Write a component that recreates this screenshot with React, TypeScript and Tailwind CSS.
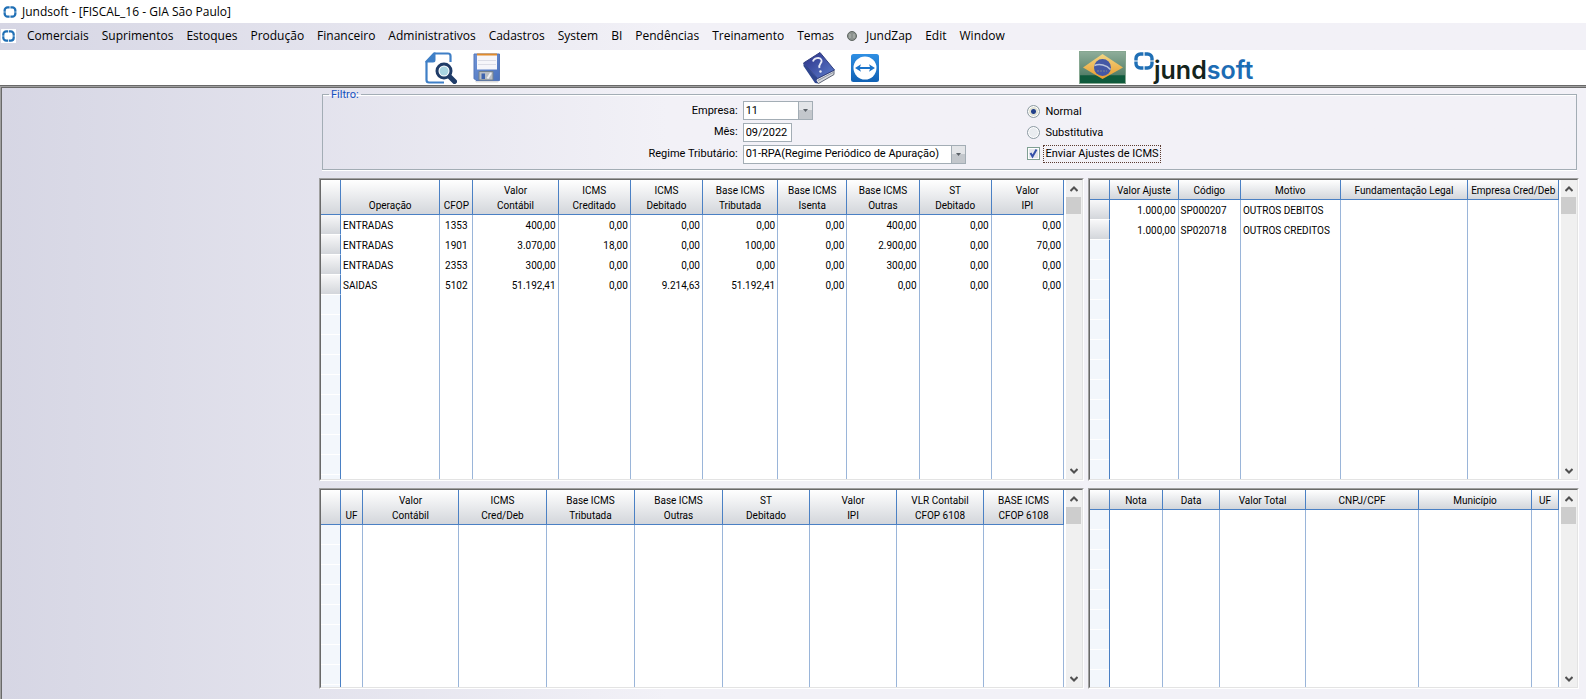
import type { ReactNode } from "react"
import clsx from "clsx"

type Align = "left" | "center" | "right"

interface Column {
  title: string[]
  width: number
  align?: Align
}

interface DataGridProps {
  label: string
  columns: Column[]
  rows?: string[][]
  tall?: boolean
}

const menuLeft = [
  "Comerciais",
  "Suprimentos",
  "Estoques",
  "Produção",
  "Financeiro",
  "Administrativos",
  "Cadastros",
  "System",
  "BI",
  "Pendências",
  "Treinamento",
  "Temas",
]

const operacoesColumns: Column[] = [
  { title: ["Operação"], width: 99 },
  { title: ["CFOP"], width: 33, align: "center" },
  { title: ["Valor", "Contábil"], width: 85, align: "right" },
  { title: ["ICMS", "Creditado"], width: 72, align: "right" },
  { title: ["ICMS", "Debitado"], width: 72, align: "right" },
  { title: ["Base ICMS", "Tributada"], width: 75, align: "right" },
  { title: ["Base ICMS", "Isenta"], width: 69, align: "right" },
  { title: ["Base ICMS", "Outras"], width: 72, align: "right" },
  { title: ["ST", "Debitado"], width: 72, align: "right" },
  { title: ["Valor", "IPI"], width: 72, align: "right" },
]

const operacoesRows = [
  ["ENTRADAS", "1353", "400,00", "0,00", "0,00", "0,00", "0,00", "400,00", "0,00", "0,00"],
  ["ENTRADAS", "1901", "3.070,00", "18,00", "0,00", "100,00", "0,00", "2.900,00", "0,00", "70,00"],
  ["ENTRADAS", "2353", "300,00", "0,00", "0,00", "0,00", "0,00", "300,00", "0,00", "0,00"],
  ["SAIDAS", "5102", "51.192,41", "0,00", "9.214,63", "51.192,41", "0,00", "0,00", "0,00", "0,00"],
]

const ajustesColumns: Column[] = [
  { title: ["Valor Ajuste"], width: 68, align: "right" },
  { title: ["Código"], width: 62 },
  { title: ["Motivo"], width: 99 },
  { title: ["Fundamentação Legal"], width: 127 },
  { title: ["Empresa Cred/Deb"], width: 90 },
]

const ajustesRows = [
  ["1.000,00", "SP000207", "OUTROS DEBITOS", "", ""],
  ["1.000,00", "SP020718", "OUTROS CREDITOS", "", ""],
]

const ufColumns: Column[] = [
  { title: ["UF"], width: 22 },
  { title: ["Valor", "Contábil"], width: 96 },
  { title: ["ICMS", "Cred/Deb"], width: 88 },
  { title: ["Base ICMS", "Tributada"], width: 88 },
  { title: ["Base ICMS", "Outras"], width: 88 },
  { title: ["ST", "Debitado"], width: 87 },
  { title: ["Valor", "IPI"], width: 87 },
  { title: ["VLR Contabil", "CFOP 6108"], width: 87 },
  { title: ["BASE ICMS", "CFOP 6108"], width: 80 },
]

const notasColumns: Column[] = [
  { title: ["Nota"], width: 53 },
  { title: ["Data"], width: 57 },
  { title: ["Valor Total"], width: 86 },
  { title: ["CNPJ/CPF"], width: 113 },
  { title: ["Município"], width: 113 },
  { title: ["UF"], width: 27 },
]

const alignClass: Record<Align, string> = {
  left: "text-left",
  center: "text-center",
  right: "text-right",
}

function BrandMark({ className }: { className?: string }) {
  return (
    <svg viewBox="0 0 20 18" className={className} fill="none" stroke="#1f6fb5" strokeWidth="3.4" aria-hidden="true">
      <path d="M9.400 2H6.500A4.500 4.500 0 0 0 2 6.500v2" />
      <path d="M10.600 2h2.900A4.500 4.500 0 0 1 18 6.500v2" />
      <path d="M9.400 16H6.500A4.500 4.500 0 0 1 2 11.500v-2" />
      <path d="M10.600 16h2.900a4.500 4.500 0 0 0 4.500-4.500v-2" />
    </svg>
  )
}

function PreviewIcon() {
  return (
    <svg viewBox="0 0 32 32" className="size-8" fill="none" aria-hidden="true">
      <path d="M9 1.500h14a2.500 2.500 0 0 1 2.500 2.500v6M1.500 9v19a2.500 2.500 0 0 0 2.500 2.500h15" stroke="#3f7fc6" strokeWidth="2.200" />
      <path d="M10.500 .5V8A2.500 2.500 0 0 1 8 10.500H.5V9L8.500 .5z" fill="#3f7fc6" />
      <path d="M25 25l4.500 4.500" stroke="#1f3c68" strokeWidth="5" strokeLinecap="round" />
      <circle cx="19" cy="19" r="7" fill="#fff" stroke="#1f3c68" strokeWidth="3" />
      <circle cx="19" cy="19" r="4.500" fill="#a9d5e2" />
    </svg>
  )
}

function SaveIcon() {
  return (
    <svg viewBox="0 0 28 30" className="h-[30px] w-7" aria-hidden="true">
      <defs>
        <linearGradient id="floppy" x1="0" y1="0" x2="1" y2="1">
          <stop offset="0" stopColor="#6f93d6" />
          <stop offset="1" stopColor="#4a72bd" />
        </linearGradient>
      </defs>
      <path d="M2 28h24l-1 1.500H3z" fill="#dcdcdc" />
      <path d="M1 1h25.500v26.500H3L1 25.500z" fill="url(#floppy)" stroke="#5577b8" />
      <path d="M4 1h20v15.500H4z" fill="#f6f6fa" />
      <path d="M4 .5h20v2H4z" fill="#e08b2c" />
      <path d="M5 7.500h18M5 11.500h18" stroke="#dcdde6" />
      <path d="M6 18.500h14v8.500H6z" fill="#b9bec4" stroke="#72808c" />
      <path d="M8.500 20.500h3.500v5.500H8.500z" fill="#3e64ae" />
      <path d="M14.500 25.500l3.500-5.500" stroke="#eef0f2" strokeWidth="2" />
    </svg>
  )
}

function HelpBookIcon() {
  return (
    <svg viewBox="0 0 32 32" className="size-8" aria-hidden="true">
      <defs>
        <linearGradient id="book" x1="0" y1="0" x2="1" y2="1">
          <stop offset="0" stopColor="#2a2e86" />
          <stop offset="1" stopColor="#5b7dcb" />
        </linearGradient>
      </defs>
      <path d="M14 26.500L31 18v4.500L15.500 31.500 12 28z" fill="#d6d8dd" stroke="#5f6676" />
      <path d="M15 28.500L31 20" stroke="#9097a5" />
      <path d="M.5 11L17 .5 31.500 18 14.500 26.500z" fill="url(#book)" stroke="#323f7e" />
      <path d="M.5 11v3L12 31l3 .5-1.500-3 1-2z" fill="#2f468f" />
      <path d="M10 9.500c.5-3.500 7-5 8.500-1.500 1.200 3-3.500 4-2 8" fill="none" stroke="#e8eaf6" strokeWidth="1.800" />
      <circle cx="17.500" cy="19.500" r="1.200" fill="#e8eaf6" />
    </svg>
  )
}

function RemoteIcon() {
  return (
    <svg viewBox="0 0 28 28" className="size-7" aria-hidden="true">
      <defs>
        <linearGradient id="remote" x1="0" y1="0" x2="0" y2="1">
          <stop offset="0" stopColor="#2f8fe3" />
          <stop offset="1" stopColor="#1061b4" />
        </linearGradient>
      </defs>
      <rect width="28" height="28" rx="2.500" fill="url(#remote)" />
      <circle cx="14" cy="14" r="11.500" fill="#fff" />
      <path d="M4 14l6-3.800-1 2.800h10l-1-2.800 6 3.800-6 3.800 1-2.800H9l1 2.800z" fill="#1a73ca" />
    </svg>
  )
}

function FlagIcon() {
  return (
    <svg viewBox="0 0 47 33" className="h-[33px] w-[47px]" aria-hidden="true">
      <defs>
        <linearGradient id="flag" x1="0" y1="0" x2="0" y2="1">
          <stop offset="0" stopColor="#8fae9a" />
          <stop offset=".72" stopColor="#55806a" />
          <stop offset=".76" stopColor="#0f5a3c" />
          <stop offset="1" stopColor="#0f5a3c" />
        </linearGradient>
        <linearGradient id="lozenge" x1="0" y1="0" x2="0" y2="1">
          <stop offset="0" stopColor="#f2d683" />
          <stop offset="1" stopColor="#e99a2c" />
        </linearGradient>
      </defs>
      <rect x=".5" y=".5" width="46" height="32" fill="url(#flag)" stroke="#86a791" />
      <path d="M23.500 3L44 16.500 23.500 28 4 16.500z" fill="url(#lozenge)" />
      <circle cx="23.500" cy="16.500" r="8.500" fill="#4458a5" />
      <path d="M15.500 14.500c5-2 12-.5 16 4" fill="none" stroke="#b9c3dc" strokeWidth="1.500" />
      <path d="M18 20h10" stroke="#7f858c" strokeDasharray="2 1" />
    </svg>
  )
}

function ToolButton({ label, children }: { label: string; children: ReactNode }) {
  return (
    <button type="button" aria-label={label} className="flex">
      {children}
    </button>
  )
}

function ScrollBar() {
  return (
    <div className="flex w-4 shrink-0 flex-col bg-[#f0f0f0]">
      <button type="button" aria-label="Rolar para cima" className="flex h-[17px] items-center justify-center">
        <svg viewBox="0 0 8 6" className="h-[6px] w-2" fill="none" stroke="#505050" strokeWidth="2" aria-hidden="true">
          <path d="M.5 5L4 1.500 7.500 5" />
        </svg>
      </button>
      <div className="h-[17px] w-[15px] bg-[#cdcdcd]" />
      <button type="button" aria-label="Rolar para baixo" className="mt-auto flex h-[17px] items-center justify-center">
        <svg viewBox="0 0 8 6" className="h-[6px] w-2" fill="none" stroke="#505050" strokeWidth="2" aria-hidden="true">
          <path d="M.5 1L4 4.500 7.500 1" />
        </svg>
      </button>
    </div>
  )
}

function DataGrid({ label, columns, rows = [], tall = false }: DataGridProps) {
  return (
    <div className="flex border border-t-[#a0a0a0] border-r-white border-b-white border-l-[#a0a0a0]">
      <div className="flex w-full gap-[2px] border border-t-[#696969] border-r-[#e3e3e3] border-b-[#e3e3e3] border-l-[#696969] bg-white">
        <table
          aria-label={label}
          className="h-full w-full min-w-0 table-fixed border-separate border-spacing-0 text-[10px] leading-[15px]"
        >
          <colgroup>
            <col style={{ width: 20 }} />
            {columns.map((column, i) => (
              <col key={i} style={{ width: column.width }} />
            ))}
          </colgroup>
          <thead>
            <tr className={tall ? "h-[35px]" : "h-5"}>
              <td className="border-r border-b border-[#4a80c4] bg-linear-to-b from-white to-[#d3d6db]" />
              {columns.map((column, i) => (
                <th
                  key={i}
                  scope="col"
                  className="border-r border-b border-[#4a80c4] bg-linear-to-b from-white to-[#d3d6db] p-0 pb-px align-bottom font-normal whitespace-nowrap"
                >
                  {column.title.map((line) => (
                    <span key={line} className="block">
                      {line}
                    </span>
                  ))}
                </th>
              ))}
            </tr>
          </thead>
          <tbody>
            {rows.map((row, r) => (
              <tr key={r} className="h-5">
                <td className="border-r border-b border-r-[#4a80c4] border-b-white bg-linear-to-b from-[#f8f8f9] to-[#d3d6db]" />
                {row.map((cell, c) => (
                  <td
                    key={c}
                    className={clsx(
                      "border-r border-[#9ab5d9] p-0 px-[2px] whitespace-nowrap",
                      alignClass[columns[c].align ?? "left"],
                    )}
                  >
                    {cell}
                  </td>
                ))}
              </tr>
            ))}
            <tr>
              <td className="border-r border-[#4a80c4] bg-[repeating-linear-gradient(to_bottom,#f3f7fc_0px,#f3f7fc_19px,#ffffff_19px,#ffffff_20px)]" />
              {columns.map((_, i) => (
                <td key={i} className="border-r border-[#9ab5d9]" />
              ))}
            </tr>
          </tbody>
        </table>
        <ScrollBar />
      </div>
    </div>
  )
}

function Combo({ id, value, className }: { id: string; value: string; className: string }) {
  return (
    <div className={clsx("relative", className)}>
      <select
        id={id}
        defaultValue={value}
        className="block h-[19px] w-full appearance-none border border-[#a3adb5] bg-white pr-4 pl-[2px] leading-4 outline-none"
      >
        <option>{value}</option>
      </select>
      <span className="pointer-events-none absolute inset-y-0 right-0 flex w-[15px] items-center justify-center border border-[#a3adb5] bg-linear-to-b from-[#e3e5e8] from-50% to-[#c3c7cc] to-50%">
        <svg viewBox="0 0 5 3" className="h-[3px] w-[5px]" aria-hidden="true">
          <path d="M0 0h5L2.500 3z" fill="#5c6268" />
        </svg>
      </span>
    </div>
  )
}

function TipoRadio({ label, checked = false }: { label: string; checked?: boolean }) {
  return (
    <label className="flex h-[21px] items-center gap-[5px]">
      <input
        type="radio"
        name="tipo"
        defaultChecked={checked}
        className="size-[13px] appearance-none rounded-full border border-[#8d9ba3] bg-[#e9ecf0] shadow-[inset_0_0_0_1px_#ffffff] checked:bg-[radial-gradient(circle,#23408a_0px,#23408a_2px,#dfe0d4_3px)]"
      />
      {label}
    </label>
  )
}

function Filtro() {
  return (
    <fieldset className="ml-[3px] border border-[#a3adb5] pb-[5px] text-[11px] leading-4 shadow-[0_1px_0_#ffffff,inset_0_1px_0_#ffffff]">
      <legend className="ml-[6px] px-[2px] leading-[13px] text-[#1450c0]">Filtro:</legend>
      <div className="grid grid-cols-[420fr_285fr_549fr]">
        <div className="col-span-2 grid grid-cols-[420fr_285fr] items-center gap-y-[2px]">
          <label htmlFor="empresa" className="pr-[5px] text-right">
            Empresa:
          </label>
          <Combo id="empresa" value="11" className="w-[70px]" />
          <label htmlFor="mes" className="pr-[5px] text-right">
            Mês:
          </label>
          <input
            id="mes"
            defaultValue="09/2022"
            className="h-[19px] w-[49px] border border-[#a3adb5] bg-white px-[2px] outline-none"
          />
          <label htmlFor="regime" className="pr-[5px] text-right">
            Regime Tributário:
          </label>
          <Combo id="regime" value="01-RPA(Regime Periódico de Apuração)" className="w-[223px]" />
        </div>
        <div className="flex flex-col">
          <TipoRadio label="Normal" checked />
          <TipoRadio label="Substitutiva" />
          <label className="flex h-[21px] items-center gap-[3px]">
            <span className="relative flex">
              <input
                type="checkbox"
                defaultChecked
                className="peer size-[13px] appearance-none border border-[#7f9f93] bg-[#e4e7ec] shadow-[inset_0_0_0_1px_#ffffff]"
              />
              <svg
                viewBox="0 0 13 13"
                className="pointer-events-none absolute inset-0 hidden size-[13px] peer-checked:block"
                fill="none"
                stroke="#3350a8"
                strokeWidth="2"
                aria-hidden="true"
              >
                <path d="M3.500 6l2 3.500L9.500 2.500" />
              </svg>
            </span>
            <span className="border border-dotted border-[#5a3a30] px-px">Enviar Ajustes de ICMS</span>
          </label>
        </div>
      </div>
    </fieldset>
  )
}

export default function App() {
  return (
    <div className="flex min-h-screen flex-col bg-linear-to-r from-[#d6d6e4] to-[#f2f1f7] to-42% font-[Roboto,'Liberation_Sans',sans-serif] text-black">
      <header>
        <div className="flex h-[23px] items-center gap-[5px] bg-white pl-[3px] font-['Open_Sans',sans-serif] text-[12px]">
          <BrandMark className="h-3 w-[14px]" />
          <h1>Jundsoft - [FISCAL_16 - GIA São Paulo]</h1>
        </div>
        <nav className="flex h-[27px] items-center gap-[11px] pb-[2px] pl-px font-['Open_Sans',sans-serif] text-[12px] whitespace-nowrap">
          <span className="bg-white p-px">
            <BrandMark className="h-3 w-[13px]" />
          </span>
          <div className="flex items-center gap-[13px]">
            {menuLeft.map((item) => (
              <button key={item} type="button">
                {item}
              </button>
            ))}
            <button type="button" className="flex items-center gap-[9px]">
              <svg viewBox="0 0 10 10" className="size-[10px]" aria-hidden="true">
                <circle cx="5" cy="5" r="4.500" fill="#8d938f" stroke="#5f6662" />
                <path d="M3 3v4M7 3v4" stroke="#b5bab6" />
              </svg>
              JundZap
            </button>
            <button type="button">Edit</button>
            <button type="button">Window</button>
          </div>
        </nav>
        <div className="flex h-9 items-center border-b border-[#696969] bg-white">
          <div className="flex w-1/2 items-center gap-4 pl-[425px]">
            <ToolButton label="Visualizar">
              <PreviewIcon />
            </ToolButton>
            <ToolButton label="Salvar">
              <SaveIcon />
            </ToolButton>
          </div>
          <div className="flex flex-1 items-center gap-4 pl-[10px]">
            <ToolButton label="Ajuda">
              <HelpBookIcon />
            </ToolButton>
            <ToolButton label="Acesso remoto">
              <RemoteIcon />
            </ToolButton>
            <div className="ml-auto flex w-[507px] items-center gap-2">
              <FlagIcon />
              <div className="flex items-start">
                <BrandMark className="h-[18px] w-5" />
                <span className="pt-1 font-['Inter',sans-serif] text-[25px] leading-7 font-semibold text-[#14241c]">
                  jund<span className="text-[#1c6cb4]">soft</span>
                </span>
              </div>
            </div>
          </div>
        </div>
      </header>

      <main className="flex flex-1 flex-col border-t border-l border-[#a0a0a0]">
        <div className="flex flex-1 flex-col gap-2 border-t border-l border-[#696969] pr-[9px] pb-[10px] pl-[317px]">
          <Filtro />
          <div className="mr-[2px] grid flex-1 grid-cols-[763fr_489fr] grid-rows-[303fr_201fr] gap-x-1 gap-y-[7px]">
            <DataGrid label="Operações" columns={operacoesColumns} rows={operacoesRows} tall />
            <DataGrid label="Ajustes de ICMS" columns={ajustesColumns} rows={ajustesRows} />
            <DataGrid label="Totais por UF" columns={ufColumns} tall />
            <DataGrid label="Notas" columns={notasColumns} />
          </div>
        </div>
      </main>
    </div>
  )
}
